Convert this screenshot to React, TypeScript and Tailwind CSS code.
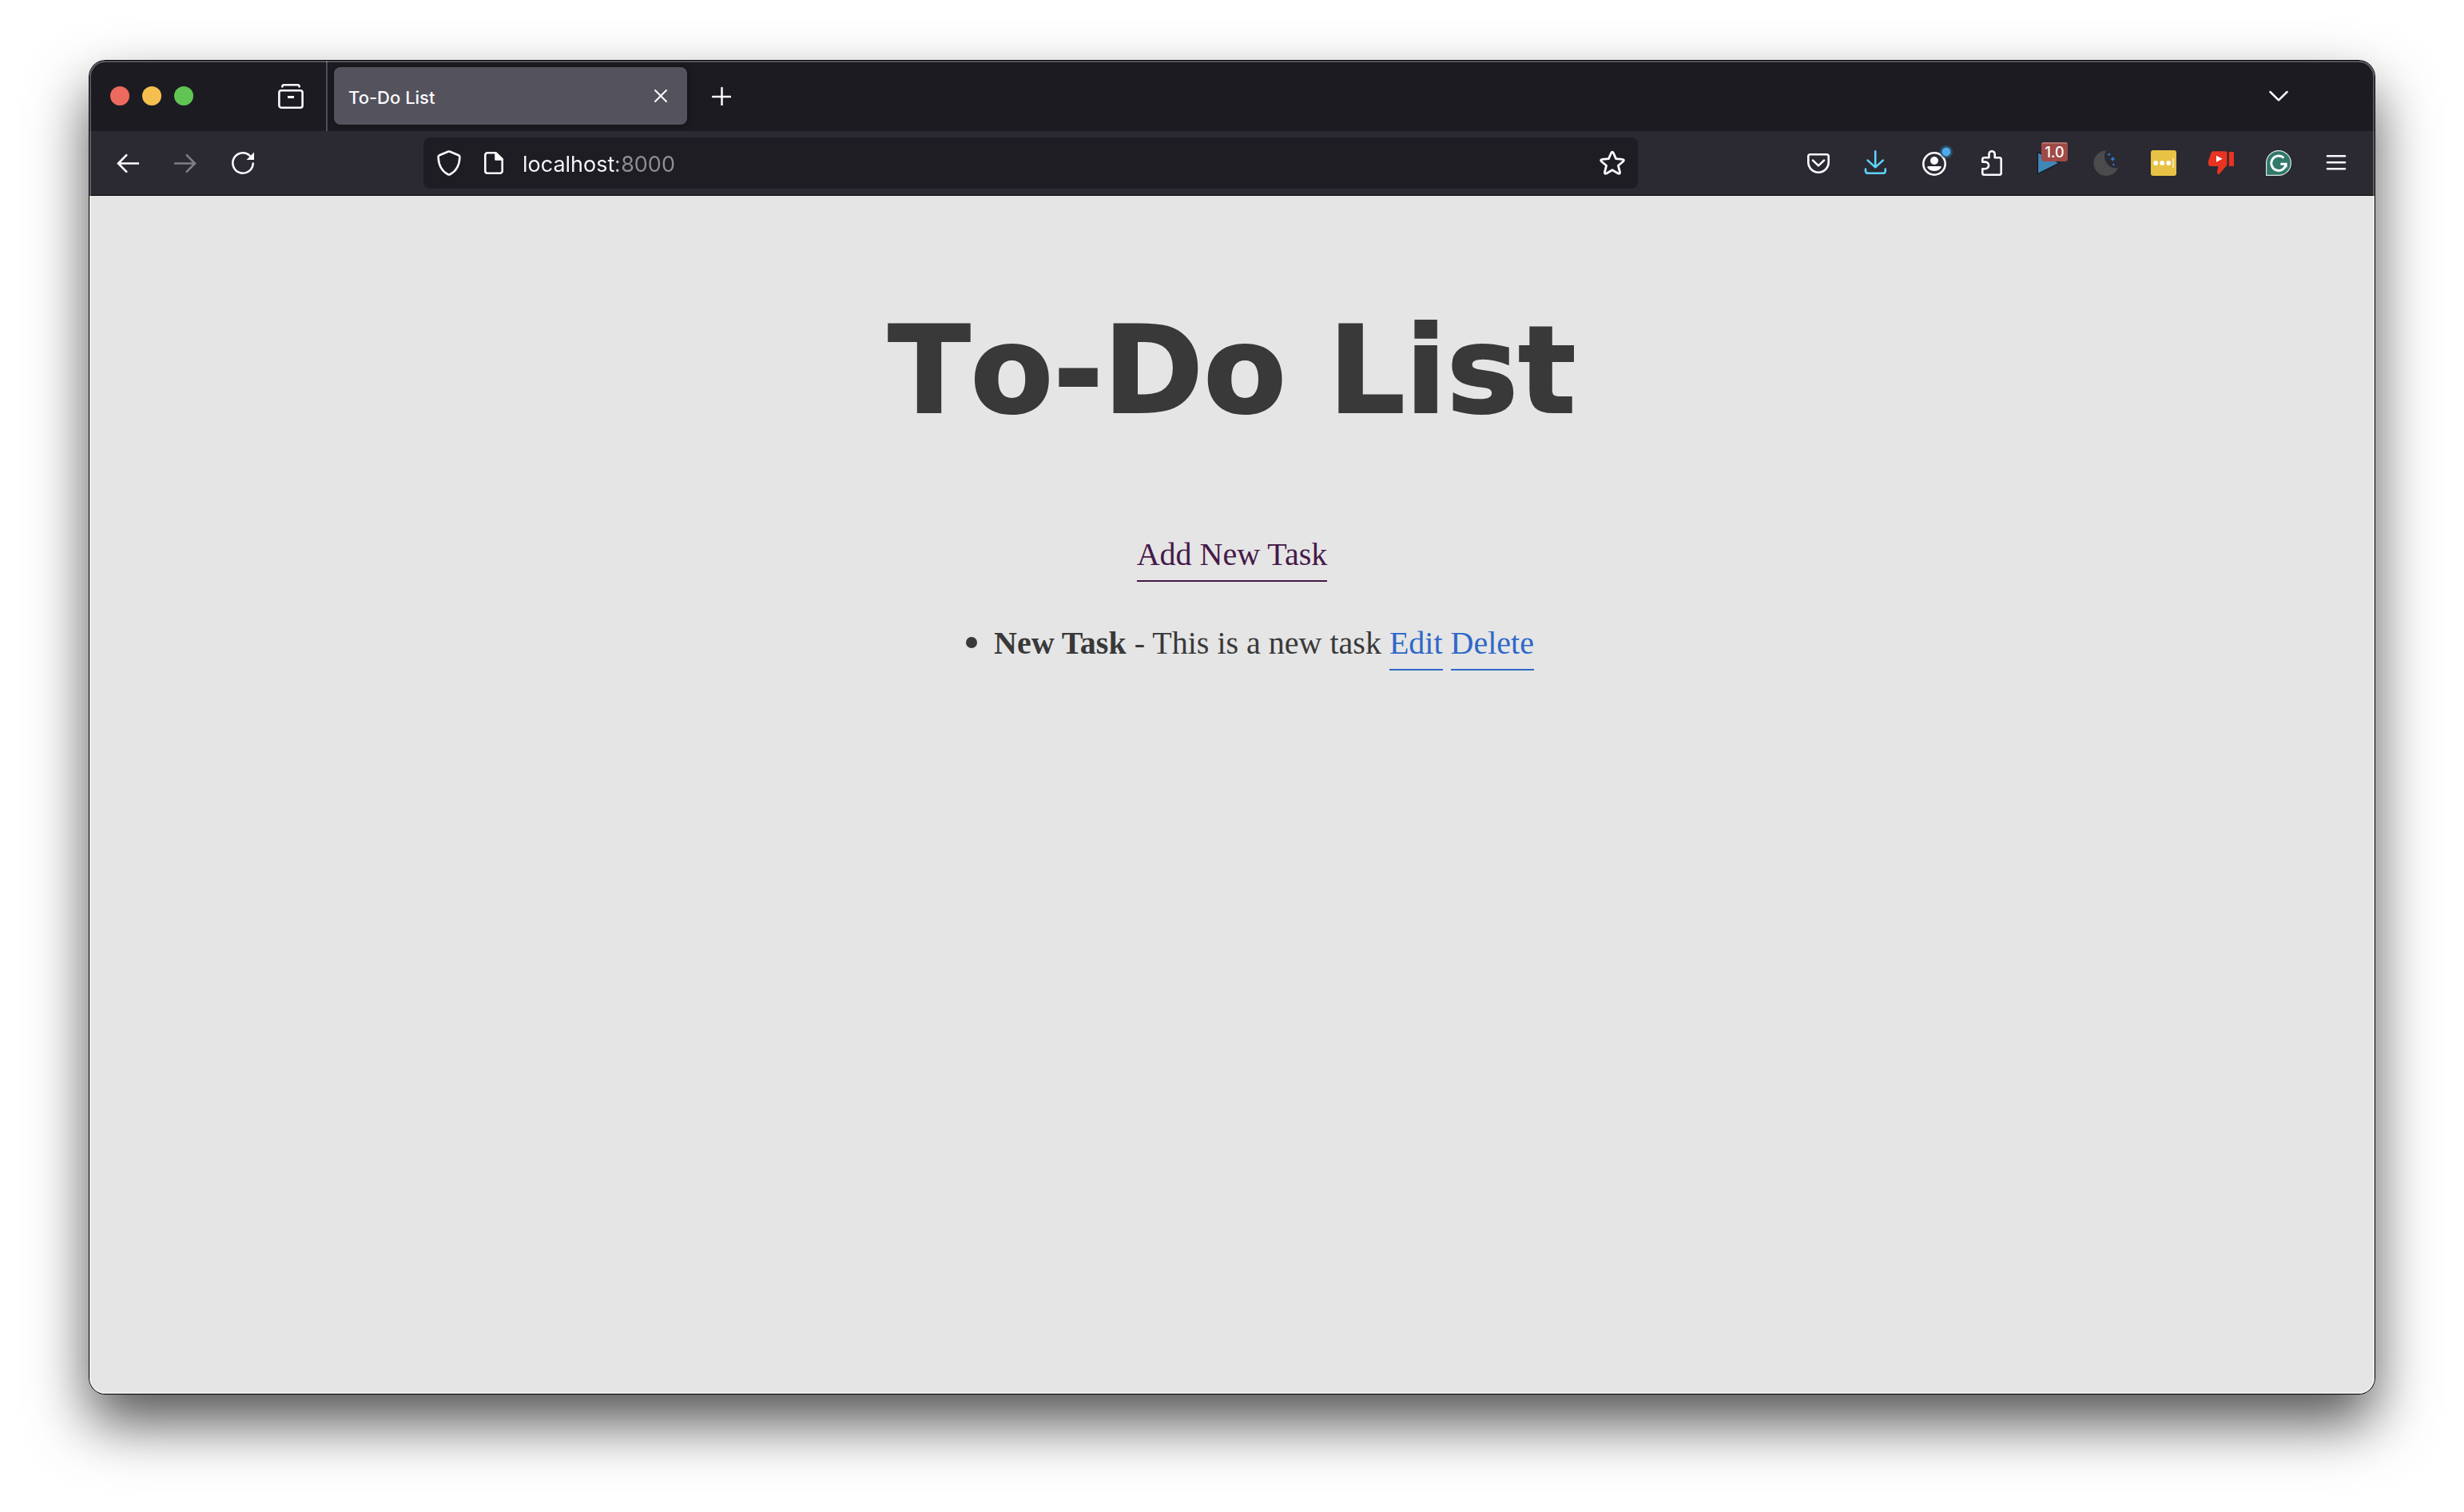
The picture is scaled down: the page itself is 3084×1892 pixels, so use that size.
import type { ReactNode } from "react";

function Glyph({ children, className = "" }: { children: ReactNode; className?: string }) {
  return (
    <svg
      viewBox="0 0 32 32"
      className={`size-8 shrink-0 overflow-visible ${className}`}
      fill="none"
      stroke="currentColor"
      strokeWidth="2.6"
      strokeLinecap="round"
      strokeLinejoin="round"
      aria-hidden="true"
    >
      {children}
    </svg>
  );
}

function ToolButton({ label, children, className = "text-[#fbfbfe]" }: { label: string; children: ReactNode; className?: string }) {
  return (
    <button type="button" aria-label={label} className={`flex h-16 w-[72px] shrink-0 items-center justify-center ${className}`}>
      {children}
    </button>
  );
}

function TabStrip() {
  return (
    <div className="flex h-[88px] items-center bg-[#1c1b22] text-[#fbfbfe]">
      <div className="ml-[26px] flex gap-4">
        <button type="button" aria-label="Close window" className="size-6 rounded-full bg-[#ed6a5e]" />
        <button type="button" aria-label="Minimize window" className="size-6 rounded-full bg-[#f5bf4f]" />
        <button type="button" aria-label="Zoom window" className="size-6 rounded-full bg-[#61c554]" />
      </div>
      <button type="button" aria-label="View tabs" className="ml-[106px]">
        <Glyph>
          <path d="M5.3 4.4A2.2 2.2 0 0 1 7.5 2.3H24.5A2.2 2.2 0 0 1 26.7 4.4" />
          <rect x="1.4" y="9.3" width="29.2" height="21.4" rx="2.6" />
          <path d="M12 17.5H20" strokeLinecap="butt" strokeWidth="3" />
        </Glyph>
      </button>
      <div className="ml-7 h-full w-[2px] bg-[#504f58]" />
      <div className="ml-2 flex h-[72px] w-[442px] items-center justify-between rounded-lg bg-[#54525d] pr-6 pl-[18px] shadow-[0_0_8px_rgba(0,0,0,0.5)]">
        <span className="pt-[3px] font-[Inter,sans-serif] text-[22px] leading-8 font-medium">To-Do List</span>
        <button type="button" aria-label="Close tab">
          <svg viewBox="0 0 18 18" className="size-[18px]" stroke="currentColor" strokeWidth="2" strokeLinecap="round" aria-hidden="true">
            <path d="M2 2L16 16M16 2L2 16" />
          </svg>
        </button>
      </div>
      <button type="button" aria-label="New tab" className="ml-[31px]">
        <svg viewBox="0 0 24 24" className="size-6" stroke="currentColor" strokeWidth="2.5" strokeLinecap="round" aria-hidden="true">
          <path d="M12.5 2V24M1 13H23.5" />
        </svg>
      </button>
      <button type="button" aria-label="List all tabs" className="mr-[108px] ml-auto">
        <svg viewBox="0 0 24 14" className="h-[14px] w-6" fill="none" stroke="currentColor" strokeWidth="2.5" strokeLinecap="round" strokeLinejoin="round" aria-hidden="true">
          <path d="M1.5 2L12 12.3L22.5 2" />
        </svg>
      </button>
    </div>
  );
}

function AddressBar() {
  return (
    <div className="min-w-0 flex-[8]">
      <div className="flex h-16 items-center rounded-lg bg-[#1e1d24] px-4 text-[#fbfbfe]">
        <button type="button" aria-label="Tracking protection">
          <Glyph>
            <path d="M14.8 1.7Q16 1.2 17.2 1.7L28 6.3Q29.5 7 29.4 8.8C29 18.6 25.4 26 17.6 30Q16 30.9 14.4 30C6.6 26 3 18.6 2.6 8.8Q2.5 7 4 6.3Z" />
          </Glyph>
        </button>
        <button type="button" aria-label="Site information" className="ml-6">
          <Glyph>
            <path d="M18.5 3.3H8A2.7 2.7 0 0 0 5.3 6V26A2.7 2.7 0 0 0 8 28.7H24A2.7 2.7 0 0 0 26.7 26V11.5Z" />
            <path d="M18.5 3.3V11.5H26.7Z" fill="currentColor" />
          </Glyph>
        </button>
        <input
          aria-label="Address"
          defaultValue="localhost:8000"
          className="ml-5 min-w-0 flex-1 bg-[linear-gradient(90deg,#fbfbfe_119px,#8f8e94_119px)] bg-clip-text pt-[3px] font-[Inter,sans-serif] text-[27px] leading-10 text-transparent outline-none"
        />
        <button type="button" aria-label="Bookmark this page">
          <Glyph>
            <path
              strokeWidth="2.8"
              d="M14.7 3.2Q16 1.2 17.3 3.2L20.6 10.6L28.6 11.4Q31.4 12 29.6 14L23.4 19.2L25.5 27.4Q25.8 30 23.2 29L16 24.7L8.8 29Q6.2 30 6.5 27.4L8.6 19.2L2.4 14Q.6 12 3.4 11.4L11.4 10.6Z"
            />
          </Glyph>
        </button>
      </div>
    </div>
  );
}

function Extensions() {
  return (
    <div className="flex">
      <ToolButton label="Save to Pocket">
        <Glyph>
          <path d="M5.8 5.3H26.2A2.5 2.5 0 0 1 28.7 7.8V15A12.7 12.7 0 0 1 3.3 15V7.8A2.5 2.5 0 0 1 5.8 5.3Z" />
          <path d="M9 12.6L16 19.4L23 12.6" />
        </Glyph>
      </ToolButton>
      <ToolButton label="Downloads" className="text-[#5cd5f8]">
        <Glyph>
          <path d="M15.2 1.2V21M5.6 12.6L15.2 21.4L24.8 12.6M3 23.5V26A2.8 2.8 0 0 0 5.8 28.8H25A2.8 2.8 0 0 0 27.8 26V23.5" />
        </Glyph>
      </ToolButton>
      <ToolButton label="Account">
        <Glyph>
          <circle cx="17" cy="17" r="13.7" />
          <circle cx="17" cy="13" r="5" fill="currentColor" stroke="none" />
          <path d="M9.5 20H24.5Q26.4 20 25.6 21.8C22.5 27.4 11.5 27.4 8.4 21.8Q7.6 20 9.5 20Z" fill="currentColor" stroke="none" />
          <circle cx="32" cy="2" r="8" fill="#2c5f7c" opacity="0.7" stroke="none" />
          <circle cx="32" cy="2" r="5.4" fill="#50a9ee" stroke="none" />
        </Glyph>
      </ToolButton>
      <ToolButton label="Extensions">
        <Glyph>
          <path d="M5.3 14.5V11.5A2.2 2.2 0 0 1 7.5 9.3H13.5V4.8A3.6 3.6 0 0 1 20.7 4.8V9.3H26.5A2.2 2.2 0 0 1 28.7 11.5V28.5A2.2 2.2 0 0 1 26.5 30.7H7.5A2.2 2.2 0 0 1 5.3 28.5V23.2H8.8A4.3 4.3 0 0 0 8.8 14.6H5.3Z" />
        </Glyph>
      </ToolButton>
      <ToolButton label="Video speed controller, 1.0">
        <span className="relative">
          <Glyph>
            <path d="M2.5 2.5V29.5L29.5 16Z" fill="#3f87b8" stroke="#14161c" strokeWidth="1.2" />
          </Glyph>
          <span className="absolute -top-[10px] left-[7px] flex h-6 w-[33px] items-center justify-center rounded-[3px] border-t-2 border-[#b3706d] bg-[#9f4a46] font-[Inter,sans-serif] text-[18px] leading-5 font-medium text-white">
            1.0
          </span>
        </span>
      </ToolButton>
      <ToolButton label="Dark mode">
        <Glyph>
          <path d="M16 .4A15.8 15.8 0 1 0 31 22A14.6 14.6 0 0 1 16 .4Z" fill="#4b4b4d" stroke="none" />
          <path
            d="M19.7 3Q20 5 22 5.3Q20 5.6 19.7 7.6Q19.4 5.6 17.4 5.3Q19.4 5 19.7 3ZM24.3 7.8Q24.8 10.6 27.6 11Q24.8 11.4 24.3 14.2Q23.8 11.4 21 11Q23.8 10.6 24.3 7.8ZM25.3 16Q25.6 17.8 27.4 18Q25.6 18.2 25.3 20Q25 18.2 23.2 18Q25 17.8 25.3 16Z"
            fill="#2b7cd0"
            stroke="none"
          />
        </Glyph>
      </ToolButton>
      <ToolButton label="Password manager">
        <Glyph>
          <g stroke="none">
            <rect width="32" height="32" rx="3" fill="#e8c245" />
            <circle cx="6.2" cy="16" r="2.9" fill="#fff" />
            <circle cx="14.2" cy="16" r="2.9" fill="#fff" />
            <circle cx="22.2" cy="16" r="2.9" fill="#fff" />
            <rect x="27.2" y="10" width="1.8" height="12" fill="#f7e8b5" />
          </g>
        </Glyph>
      </ToolButton>
      <ToolButton label="Return dislikes">
        <Glyph>
          <g stroke="none">
            <path
              d="M6 1.3H21A2.5 2.5 0 0 1 23.5 3.8V17.4Q23.5 18.6 22.6 19.6L14 29.4Q12.9 30.4 11.8 29.4Q10.8 28.4 11.1 26.8L12.4 20H3A3 3 0 0 1 0 17V13.5L3.6 3Q4.3 1.3 6 1.3Z"
              fill="#e93323"
            />
            <path d="M25.8 2H31Q32 2 32 3V19Q32 20 31 20H25.8Z" fill="#e93323" />
            <path d="M10 6.8L17.6 10.8L10 14.8Z" fill="#fff" />
          </g>
        </Glyph>
      </ToolButton>
      <ToolButton label="Grammarly">
        <Glyph>
          <path d="M.6 31.4V16A15.4 15.4 0 1 1 16 31.4Z" fill="#31796a" stroke="#dde8e5" strokeWidth="1.2" />
          <path d="M22.4 9.6A9.2 9.2 0 1 0 25.2 17.2H18.4M25.2 17.2V21.2" stroke="#fff" strokeWidth="2.9" strokeLinecap="butt" strokeLinejoin="miter" />
        </Glyph>
      </ToolButton>
      <ToolButton label="Open application menu">
        <Glyph>
          <path d="M5 7.2H27M5 15.2H27M5 23.2H27" />
        </Glyph>
      </ToolButton>
    </div>
  );
}

function Toolbar() {
  return (
    <div className="flex h-[81px] items-center border-b border-black bg-[#2b2a33] px-3">
      <ToolButton label="Back">
        <Glyph className="[stroke-linecap:butt] [stroke-linejoin:miter]">
          <path d="M30 16.5H4M15 5.3L4 16.5L15 27.7" />
        </Glyph>
      </ToolButton>
      <ToolButton label="Forward" className="text-[#7f7e84]">
        <Glyph className="[stroke-linecap:butt] [stroke-linejoin:miter]">
          <path d="M2 16.5H28M17 5.3L28 16.5L17 27.7" />
        </Glyph>
      </ToolButton>
      <ToolButton label="Reload">
        <Glyph>
          <path d="M28.7 16.5A12.7 12.7 0 1 1 24.5 6.6" />
          <path d="M30 2.5V12H20.5Z" fill="currentColor" stroke="none" />
        </Glyph>
      </ToolButton>
      <div className="flex-1" />
      <AddressBar />
      <div className="flex-1" />
      <Extensions />
    </div>
  );
}

function TodoPage() {
  return (
    <main className="flex flex-1 flex-col items-center bg-[#e5e5e5] pt-[126px] text-[#393939]">
      <h1 className="font-['DejaVu_Sans',sans-serif] text-[151px] leading-[186px] font-bold [font-kerning:none] [-webkit-text-stroke:2px_#393939]">To-Do List</h1>
      <p className="mt-[107px] font-['Liberation_Serif',serif] text-[40px] leading-[60px]">
        <a href="#add" className="border-b-2 border-[#451a49] pb-[10px] text-[#451a49]">
          Add New Task
        </a>
      </p>
      <ul className="mt-12 list-disc pl-20 font-['Liberation_Serif',serif] text-[40px] leading-[60px] marker:text-[48px]">
        <li>
          <strong>New Task</strong> - This is a new task{" "}
          <a href="#edit" className="border-b-2 border-[#2f68c9] pb-[10px] text-[#2f68c9]">
            Edit
          </a>{" "}
          <a href="#delete" className="border-b-2 border-[#2f68c9] pb-[10px] text-[#2f68c9]">
            Delete
          </a>
        </li>
      </ul>
    </main>
  );
}

export default function App() {
  return (
    <div className="flex min-h-screen bg-white px-28 pt-[76px] pb-[148px]">
      <div className="relative flex flex-1 flex-col rounded-[20px] shadow-[0_0_0_1px_#000,0_36px_72px_rgba(0,0,0,0.68)]">
        <div className="flex flex-1 flex-col overflow-hidden rounded-[20px]">
          <TabStrip />
          <Toolbar />
          <TodoPage />
        </div>
        <div className="pointer-events-none absolute inset-0 rounded-[20px] shadow-[inset_0_0_0_2px_rgba(255,255,255,0.25)]" />
      </div>
    </div>
  );
}
